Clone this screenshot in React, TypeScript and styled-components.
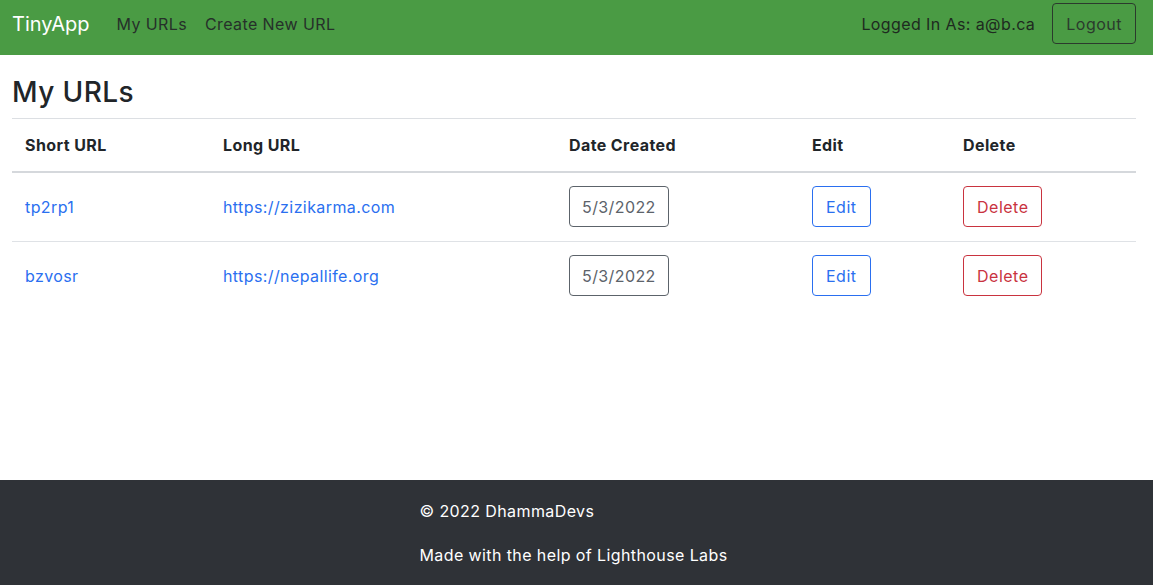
import styled, { createGlobalStyle } from 'styled-components'

const GlobalStyle = createGlobalStyle`
  html, body {
    margin: 0;
    padding: 0;
  }
  body {
    font-family: Inter, 'Noto Sans', 'Liberation Sans', sans-serif;
    font-size: 16px;
    line-height: 1.5;
    letter-spacing: 0.4px;
    color: #212529;
    background: #fff;
  }
  * {
    box-sizing: border-box;
  }
`

const Page = styled.div`
  min-height: 100vh;
  display: flex;
  flex-direction: column;
`

const NavBar = styled.nav`
  height: 55px;
  background: #4a9b44;
  display: flex;
  align-items: center;
  padding: 0 17px 0 12px;
`

const Brand = styled.a`
  color: #fff;
  font-size: 20px;
  line-height: 30px;
  letter-spacing: 0;
  margin-right: 27px;
  text-decoration: none;
  margin-top: -7px;
`

const NavLink = styled.a`
  color: #26302a;
  font-size: 16px;
  line-height: 24px;
  margin-right: 18px;
  text-decoration: none;
  margin-top: -7px;
`

const Spacer = styled.div`
  flex: 1;
`

const UserText = styled.span`
  color: #1e2a20;
  margin-right: 17px;
  margin-top: -7px;
`

const OutlineButton = styled.button<{ $tone: string }>`
  font-family: inherit;
  font-size: 16px;
  line-height: 24px;
  letter-spacing: 0.5px;
  height: 41px;
  padding: 0 13px;
  background: transparent;
  border: 1px solid ${p => p.$tone};
  color: ${p => p.$tone};
  border-radius: 4px;
  cursor: pointer;
`

const DateButton = styled(OutlineButton)`
  padding: 0 12px;
  letter-spacing: 0.4px;
`

const LogoutButton = styled(OutlineButton)`
  margin-top: -8px;
`

const Main = styled.main`
  flex: 1;
  padding: 0 17px 0 12px;
`

const Heading = styled.h1`
  font-size: 28px;
  font-weight: 500;
  line-height: 34px;
  letter-spacing: 0.4px;
  margin: 20px 0 0;
  padding-bottom: 9px;
`

const Table = styled.table`
  width: 100%;
  border-collapse: collapse;
  table-layout: fixed;
  border-top: 1px solid #dcdfe3;
`

const HeadCell = styled.th<{ $w: number }>`
  width: ${p => p.$w}px;
  text-align: left;
  font-weight: 700;
  padding: 14px 13px;
  line-height: 24px;
  border-bottom: 2px solid #d5d8dc;
`

const Cell = styled.td`
  padding: 13px 13px 14px;
  border-bottom: 1px solid #dfe2e6;
  vertical-align: middle;
`

const LastRowCell = styled(Cell)`
  border-bottom: none;
`

const Link = styled.a`
  color: #2a6ff0;
  text-decoration: none;
`

const Footer = styled.footer`
  background: #2f3237;
  color: #fff;
  display: flex;
  justify-content: center;
  padding: 19px 0 18px;
`

const FooterInner = styled.div`
  display: flex;
  flex-direction: column;
  gap: 20px;
  width: 310px;
  margin-left: -4px;
`

const urls = [
  { short: 'tp2rp1', long: 'https://zizikarma.com', date: '5/3/2022' },
  { short: 'bzvosr', long: 'https://nepallife.org', date: '5/3/2022' }
]

const App = () => {
  return (
    <Page>
      <GlobalStyle />
      <NavBar>
        <Brand href='#'>TinyApp</Brand>
        <NavLink href='#'>My URLs</NavLink>
        <NavLink href='#'>Create New URL</NavLink>
        <Spacer />
        <UserText>Logged In As: a@b.ca</UserText>
        <LogoutButton $tone='#2b3a2d'>Logout</LogoutButton>
      </NavBar>
      <Main>
        <Heading>My URLs</Heading>
        <Table>
          <thead>
            <tr>
              <HeadCell $w={198}>Short URL</HeadCell>
              <HeadCell $w={346}>Long URL</HeadCell>
              <HeadCell $w={243}>Date Created</HeadCell>
              <HeadCell $w={151}>Edit</HeadCell>
              <HeadCell $w={186}>Delete</HeadCell>
            </tr>
          </thead>
          <tbody>
            {urls.map((u, i) => {
              const C = i === urls.length - 1 ? LastRowCell : Cell
              return (
                <tr key={u.short}>
                  <C><Link href='#'>{u.short}</Link></C>
                  <C><Link href='#'>{u.long}</Link></C>
                  <C><DateButton $tone='#5c636a'>{u.date}</DateButton></C>
                  <C><OutlineButton $tone='#2a6ff0'>Edit</OutlineButton></C>
                  <C><OutlineButton $tone='#c9333f'>Delete</OutlineButton></C>
                </tr>
              )
            })}
          </tbody>
        </Table>
      </Main>
      <Footer>
        <FooterInner>
          <span>© 2022 DhammaDevs</span>
          <span>Made with the help of Lighthouse Labs</span>
        </FooterInner>
      </Footer>
    </Page>
  )
}

export default App
